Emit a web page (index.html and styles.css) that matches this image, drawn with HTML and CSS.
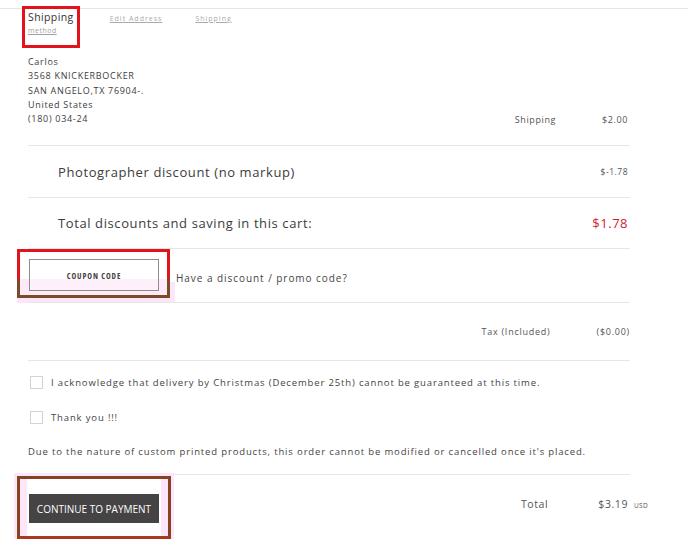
FILE: index.html
```html
<!DOCTYPE html>
<html lang="en">
<head>
<meta charset="UTF-8">
<title>Checkout - Review</title>
<link rel="stylesheet" href="styles.css">
</head>
<body>

<!-- steps -->
<header class="steps">
  <a class="step step-current" href="#">Shipping<span class="step-sub">method</span></a>
  <a class="step" href="#">Edit Address</a>
  <a class="step" href="#">Shipping</a>
</header>

<main class="cart">
  <!-- address + shipping cost -->
  <section class="ship-row">
    <address class="addr">
      Carlos<br>
      3568 KNICKERBOCKER<br>
      SAN ANGELO,TX 76904-.<br>
      United States<br>
      (180) 034-24
    </address>
    <div class="line-item">
      <span class="li-label">Shipping</span>
      <span class="li-value">$2.00</span>
    </div>
  </section>

  <!-- discounts -->
  <div class="big-row">
    <span class="big-label">Photographer discount (no markup)</span>
    <span class="small-value">$-1.78</span>
  </div>
  <div class="big-row big-row-total">
    <span class="big-label">Total discounts and saving in this cart:</span>
    <span class="save-value">$1.78</span>
  </div>

  <!-- coupon -->
  <div class="coupon-row">
    <div class="mark mark-coupon">
      <button class="btn-coupon" type="button">COUPON CODE</button>
    </div>
    <span class="coupon-text">Have a discount / promo code?</span>
  </div>

  <div class="tax-row">
    <div class="line-item">
      <span class="li-label">Tax (Included)</span>
      <span class="li-value">($0.00)</span>
    </div>
  </div>

  <!-- agreements -->
  <div class="terms">
    <label class="check"><span class="box"></span>I acknowledge that delivery by Christmas (December 25th) cannot be guaranteed at this time.</label>
    <label class="check"><span class="box"></span>Thank you !!!</label>
    <p class="notice">Due to the nature of custom printed products, this order cannot be modified or cancelled once it's placed.</p>
  </div>

  <div class="pay-row">
    <div class="mark mark-pay">
      <button class="btn-pay" type="button">CONTINUE TO PAYMENT</button>
    </div>
    <div class="total">
      <span class="total-label">Total</span>
      <span class="total-value">$3.19</span><span class="cur">USD</span>
    </div>
  </div>
</main>

</body>
</html>
```

FILE: styles.css
```css
:root{
  --line: #e6e6e6;
  --text: #444;
  --red: #cf2333;
}
*{ box-sizing:border-box; }

body{
  margin:0;
  font-family: "Open Sans", "Liberation Sans", sans-serif;
  color:var(--text);
  background:#fff;
}

/* step links at the top */
.steps{
  margin-top:8px;
  border-top:1px solid var(--line);
  display:flex;
  align-items:flex-start;
  gap:33px;
  padding:0 0 0 25px;
  height:47px;
}
.step{
  font-size:7px;
  letter-spacing:1px;
  color:#aaa;
  text-decoration:underline;
  margin-top:5px;
  line-height:10px;
}
.step-current{
  display:flex;
  flex-direction:column;
  margin-top:0;
  padding:1px 3px 10px;
  font-size:10.5px;
  letter-spacing:.4px;
  line-height:14px;
  color:#333;
  text-decoration:none;
  outline:3px solid #e3131b;
}
.step-sub{
  margin-top:2px;
  font-size:7px;
  line-height:9px;
  letter-spacing:.5px;
  color:#a0a0a0;
  text-decoration:underline;
}

/* main column */
.cart{
  margin-left:28px;
  width:602px;
}

.ship-row{
  display:flex;
  justify-content:space-between;
  align-items:flex-end;
  padding-bottom:19px;
  border-bottom:1px solid var(--line);
}
.addr{
  font-style:normal;
  font-size:9px;
  letter-spacing:.7px;
  line-height:14.3px;
  color:#3c3c3c;
}

.line-item{
  display:flex;
  gap:46px;
  font-size:9px;
  letter-spacing:.6px;
  color:#555;
  padding-right:2px;
}

.big-row{
  display:flex;
  justify-content:space-between;
  align-items:center;
  height:52px;
  padding:0 2px 0 30px;
  border-bottom:1px solid var(--line);
}
.big-row-total{ height:51px; }
.big-label{
  font-size:13px;
  letter-spacing:.6px;
  color:#3c3c3c;
}
.small-value{
  font-size:8.5px;
  letter-spacing:.5px;
  color:#555;
}
.save-value{
  font-size:13px;
  letter-spacing:.5px;
  color:var(--red);
}

/* coupon */
.coupon-row{
  display:flex;
  align-items:flex-start;
  height:54px;
  border-bottom:1px solid var(--line);
}
.mark{ position:relative; }
.mark-coupon{
  margin-left:-11px;
  width:153px;
  height:49px;
  padding:7px 8px 0 9px;
  border:3px solid;
  border-image:linear-gradient(#e3131b 62%, #7d4a27 62%) 1;
  background:linear-gradient(transparent 62%, #fde9f7 62%);
}
.mark-coupon::after{
  content:"";
  position:absolute;
  left:-3px; right:-8px; top:30px; bottom:-8px;
  background:#fde6fa;
  z-index:-1;
}
.btn-coupon{
  display:block;
  width:130px;
  height:32px;
  border:1px solid #8d8d8d;
  background:linear-gradient(#fff 62%, #fdf0fa 62%);
  font-family:"Open Sans", sans-serif;
  font-stretch:75%;
  font-size:8px;
  font-weight:700;
  letter-spacing:.9px;
  color:#444;
  padding:0;
}
.coupon-text{
  margin:22px 0 0 6px;
  font-size:10px;
  letter-spacing:.95px;
  color:#444;
}

.tax-row{
  display:flex;
  justify-content:flex-end;
  align-items:center;
  height:58px;
  border-bottom:1px solid var(--line);
}
.tax-row .line-item{ gap:46px; padding-right:0; letter-spacing:.75px; }

/* agreements */
.terms{
  padding-top:14px;
  font-size:9.5px;
  letter-spacing:.85px;
  color:#444;
}
.check{
  display:flex;
  align-items:center;
  gap:8px;
  margin-left:2px;
  height:14px;
  margin-bottom:21px;
}
.box{
  width:13px; height:13px;
  border:1px solid #d4d4d4;
  background:#fff;
}
.notice{
  margin:0;
  line-height:14px;
  letter-spacing:.85px;
  padding-bottom:15px;
  border-bottom:1px solid var(--line);
}

/* pay */
.pay-row{
  display:flex;
  justify-content:space-between;
  align-items:flex-start;
}
.mark-pay{
  margin:1px 0 0 -11px;
  width:154px;
  height:63px;
  padding:15px 9px 0 9px;
  border:3px solid #854324;
  border-bottom-color:#a83a1f;
  background:linear-gradient(90deg, #fde6fa 0 7px, #fff 7px calc(100% - 7px), #fde6fa calc(100% - 7px));
  box-shadow:0 0 0 3px #fde6fa;
}
.btn-pay{
  display:block;
  width:130px;
  height:29px;
  border:0;
  background:#454343;
  color:#fff;
  font-family:"Open Sans", sans-serif;
  font-stretch:90%;
  font-size:10px;
  font-weight:500;
  letter-spacing:0;
  white-space:nowrap;
  padding:0;
}
.total{
  display:flex;
  align-items:baseline;
  margin:22px -18px 0 0;
  font-size:10.5px;
  letter-spacing:.6px;
  color:#555;
}
.total-label{ margin-right:50px; }
.cur{
  font-size:6.5px;
  margin-left:6px;
  letter-spacing:.3px;
}
```
